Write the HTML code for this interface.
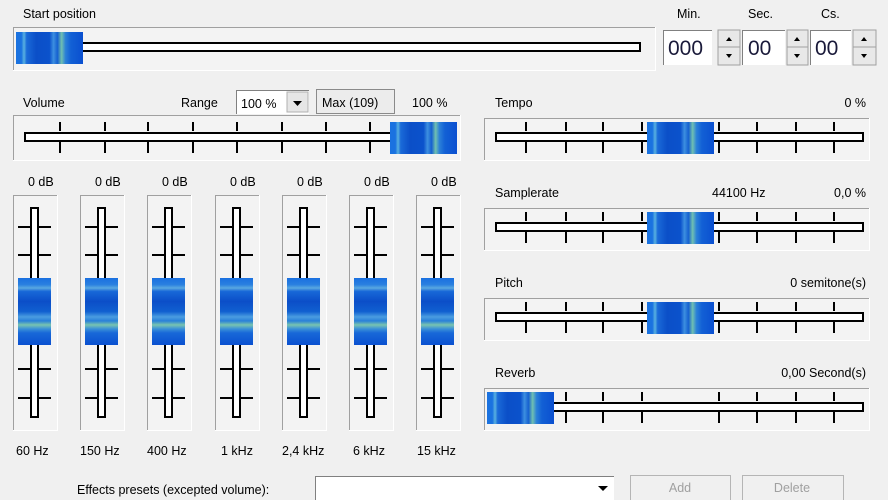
<!DOCTYPE html>
<html><head><meta charset="utf-8"><style>
html,body{margin:0;padding:0;background:#f0f0f0;width:888px;height:500px;overflow:hidden}
svg{position:absolute;left:0;top:0}
text{font-family:"Liberation Sans",sans-serif;font-size:12.5px;fill:#000}
</style></head><body>
<svg width="888" height="500" viewBox="0 0 888 500" shape-rendering="crispEdges">
<defs>
<linearGradient id="hg" x1="0" x2="1" y1="0" y2="0">
<stop offset="0" stop-color="#1a72e0"/><stop offset=".08" stop-color="#1a72e0"/>
<stop offset=".12" stop-color="#58b0e0"/><stop offset=".16" stop-color="#1a6ad8"/>
<stop offset=".3" stop-color="#0b4fc8"/><stop offset=".5" stop-color="#0b52cc"/>
<stop offset=".56" stop-color="#3d8fe0"/><stop offset=".62" stop-color="#1560d0"/>
<stop offset=".68" stop-color="#70c0b0"/><stop offset=".74" stop-color="#2a7fd8"/>
<stop offset=".82" stop-color="#1260d5"/><stop offset="1" stop-color="#0a4fd0"/>
</linearGradient>
<linearGradient id="vg" x1="0" x2="0" y1="0" y2="1">
<stop offset="0" stop-color="#1a70e0"/><stop offset=".1" stop-color="#2a80e0"/>
<stop offset=".15" stop-color="#5aa8e0"/><stop offset=".2" stop-color="#1868d8"/>
<stop offset=".35" stop-color="#0b4ec8"/><stop offset=".5" stop-color="#1060d0"/>
<stop offset=".58" stop-color="#4a9ce0"/><stop offset=".64" stop-color="#2a80d8"/>
<stop offset=".7" stop-color="#78c4b0"/><stop offset=".76" stop-color="#3a90d8"/>
<stop offset=".82" stop-color="#1868d8"/><stop offset="1" stop-color="#0a50d0"/>
</linearGradient>
</defs>

<!-- Start position -->
<text x="23" y="18">Start position</text>
<rect x="13" y="27" width="642" height="43" fill="#f3f3f3"/>
<path d="M13.5 70V27.5H655" stroke="#a0a0a0" fill="none"/>
<path d="M13 70.5H655.5V27" stroke="#fff" fill="none"/>
<rect x="81" y="43" width="559" height="8" fill="#fff" stroke="#000" stroke-width="2"/>
<rect x="16" y="32" width="67" height="32" fill="url(#hg)"/>

<!-- spinners -->
<text x="677" y="18">Min.</text><text x="748" y="18">Sec.</text><text x="821" y="18">Cs.</text>
<rect x="663" y="30" width="49" height="35" fill="#fff"/><path d="M663.5 65V30.5H712" stroke="#808080" fill="none"/>
<rect x="742" y="30" width="43" height="35" fill="#fff"/><path d="M742.5 65V30.5H785" stroke="#808080" fill="none"/>
<rect x="810" y="30" width="41" height="35" fill="#fff"/><path d="M810.5 65V30.5H851" stroke="#808080" fill="none"/>
<text x="668" y="55" style="font-size:21px;fill:#1a1a3a">000</text>
<text x="748" y="55" style="font-size:21px;fill:#1a1a3a">00</text>
<text x="815" y="55" style="font-size:21px;fill:#1a1a3a">00</text>
<g>
<rect x="718" y="30" width="22" height="17" fill="#e8e8e8" stroke="#a0a0a0"/><rect x="718" y="47" width="22" height="18" fill="#e8e8e8" stroke="#a0a0a0"/>
<rect x="787" y="30" width="21" height="17" fill="#e8e8e8" stroke="#a0a0a0"/><rect x="787" y="47" width="21" height="18" fill="#e8e8e8" stroke="#a0a0a0"/>
<rect x="853" y="30" width="23" height="17" fill="#e8e8e8" stroke="#a0a0a0"/><rect x="853" y="47" width="23" height="18" fill="#e8e8e8" stroke="#a0a0a0"/>
<path d="M726 41h6l-3-4z M726 54h6l-3 4z M794 41h6l-3-4z M794 54h6l-3 4z M861 41h6l-3-4z M861 54h6l-3 4z" fill="#000" shape-rendering="auto"/>
</g>

<!-- Volume -->
<text x="23" y="107">Volume</text><text x="181" y="107">Range</text>
<rect x="236" y="90" width="73" height="24" fill="#fff"/>
<path d="M236.5 114V90.5H309" stroke="#808080" fill="none"/>
<text x="241" y="108">100 %</text>
<rect x="287" y="92" width="21" height="20" fill="#e6e6e6" stroke="#b0b0b0"/>
<path d="M293 101h9l-4.5 5z" fill="#000" shape-rendering="auto"/>
<rect x="316.5" y="89.5" width="78" height="24" fill="#ececec" stroke="#8a8a8a"/>
<text x="322" y="107">Max (109)</text>
<text x="412" y="107">100 %</text>
<rect x="13" y="115" width="447" height="45" fill="#f3f3f3"/>
<path d="M13.5 160V115.5H460" stroke="#a0a0a0" fill="none"/>
<path d="M13 160.5H460.5V115" stroke="#fff" fill="none"/>
<path d="M60 122v9M60 142v11M105 122v9M105 142v11M148 122v9M148 142v11M193 122v9M193 142v11M237 122v9M237 142v11M282 122v9M282 142v11M326 122v9M326 142v11M370 122v9M370 142v11" stroke="#000" stroke-width="2"/>
<rect x="25" y="133" width="431" height="8" fill="#fff" stroke="#000" stroke-width="2"/>
<rect x="390" y="122" width="67" height="32" fill="url(#hg)"/>

<!-- EQ -->
<g id="eq0">
<rect x="13" y="195" width="44" height="235" fill="#f3f3f3"/>
<path d="M13.5 430V195.5H57" stroke="#a0a0a0" fill="none"/><path d="M13 430.5H57.5V195" stroke="#fff" fill="none"/>
<path d="M18 227h33M18 255h33M18 369h33M18 398h33" stroke="#000" stroke-width="2"/>
<rect x="31" y="208" width="7" height="209" fill="#fff" stroke="#000" stroke-width="2"/>
<rect x="18" y="278" width="33" height="67" fill="url(#vg)"/>
</g>
<use href="#eq0" x="67"/><use href="#eq0" x="134"/><use href="#eq0" x="202"/><use href="#eq0" x="269"/><use href="#eq0" x="336"/><use href="#eq0" x="403"/>
<g>
<text x="28" y="186">0 dB</text><text x="95" y="186">0 dB</text><text x="162" y="186">0 dB</text><text x="230" y="186">0 dB</text><text x="297" y="186">0 dB</text><text x="364" y="186">0 dB</text><text x="431" y="186">0 dB</text>
<text x="16" y="455">60 Hz</text><text x="80" y="455">150 Hz</text><text x="147" y="455">400 Hz</text><text x="221" y="455">1 kHz</text><text x="282" y="455">2,4 kHz</text><text x="353" y="455">6 kHz</text><text x="417" y="455">15 kHz</text>
</g>

<!-- Right sliders -->
<g id="rs">
<rect x="484" y="118" width="385" height="42" fill="#f3f3f3"/>
<path d="M484.5 160V118.5H869" stroke="#a0a0a0" fill="none"/><path d="M484 160.5H869.5V118" stroke="#fff" fill="none"/>
<path d="M526 122v9M526 142v11M566 122v9M566 142v11M603 122v9M603 142v11M642 122v9M642 142v11M719 122v9M719 142v11M757 122v9M757 142v11M796 122v9M796 142v11M834 122v9M834 142v11" stroke="#000" stroke-width="2"/>
<rect x="496" y="133" width="367" height="8" fill="#fff" stroke="#000" stroke-width="2"/>
</g>
<rect x="647" y="122" width="67" height="32" fill="url(#hg)"/>
<use href="#rs" y="90"/><rect x="647" y="212" width="67" height="32" fill="url(#hg)"/>
<use href="#rs" y="180"/><rect x="647" y="302" width="67" height="32" fill="url(#hg)"/>
<use href="#rs" y="270"/><rect x="487" y="392" width="67" height="32" fill="url(#hg)"/>
<text x="495" y="107">Tempo</text><text x="866" y="107" text-anchor="end">0 %</text>
<text x="495" y="197">Samplerate</text><text x="712" y="197">44100 Hz</text><text x="866" y="197" text-anchor="end">0,0 %</text>
<text x="495" y="287">Pitch</text><text x="866" y="287" text-anchor="end">0 semitone(s)</text>
<text x="495" y="377">Reverb</text><text x="866" y="377" text-anchor="end">0,00 Second(s)</text>

<!-- bottom -->
<text x="77" y="494">Effects presets (excepted volume):</text>
<rect x="315" y="476" width="299" height="26" fill="#fff"/>
<path d="M315.5 502V476.5H614" stroke="#808080" fill="none"/>
<path d="M598 486h10l-5 5z" fill="#000" shape-rendering="auto"/>
<rect x="630.5" y="475.5" width="100" height="30" fill="#f0f0f0" stroke="#b5b5b5"/>
<rect x="742.5" y="475.5" width="101" height="30" fill="#f0f0f0" stroke="#b5b5b5"/>
<text x="680" y="492" text-anchor="middle" style="fill:#a0a0a0">Add</text>
<text x="792" y="492" text-anchor="middle" style="fill:#a0a0a0">Delete</text>
</svg>
</body></html>
